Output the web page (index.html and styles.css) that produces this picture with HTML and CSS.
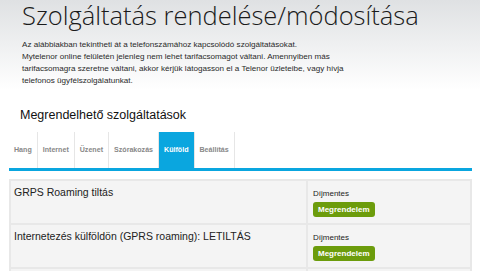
FILE: index.html
```html
<!DOCTYPE html>
<html lang="hu">
<head>
    <meta charset="UTF-8">
    <meta name="viewport" content="width=device-width, initial-scale=1.0">
    <title>Szolgáltatás rendelése/módosítása</title>
    <link rel="stylesheet" href="styles.css">
</head>
<body>
    <div class="head">
        <h1>Szolgáltatás rendelése/módosítása</h1>
        <p class="intro">Az alábbiakban tekintheti át a telefonszámához kapcsolódó szolgáltatásokat.<br>
        Mytelenor online felületén jelenleg nem lehet tarifacsomagot váltani. Amennyiben más<br>
        tarifacsomagra szeretne váltani, akkor kérjük látogasson el a Telenor üzleteibe, vagy hívja<br>
        telefonos ügyfélszolgálatunkat.</p>
    </div>
    <h2>Megrendelhető szolgáltatások</h2>
    <div class="tabs">
        <a class="tab">Hang</a>
        <a class="tab">Internet</a>
        <a class="tab">Üzenet</a>
        <a class="tab">Szórakozás</a>
        <a class="tab active">Külföld</a>
        <a class="tab">Beállítás</a>
    </div>
    <table class="services">
        <tr>
            <td class="name">GRPS Roaming tiltás</td>
            <td class="price">Díjmentes<br><button>Megrendelem</button></td>
        </tr>
        <tr>
            <td class="name">Internetezés külföldön (GPRS roaming): LETILTÁS</td>
            <td class="price">Díjmentes<br><button>Megrendelem</button></td>
        </tr>
        <tr>
            <td class="name">&nbsp;</td>
            <td class="price">&nbsp;</td>
        </tr>
    </table>
</body>
</html>
```

FILE: styles.css
```css
body { margin: 0; font-family: "Liberation Sans", Arial, sans-serif; color: #222; background: #fff; overflow: hidden; }
.head { background: linear-gradient(#dfe1e3, #fff 90px); padding: 1px 22px 14px; }
h1 { margin: 0; font-family: "Open Sans", sans-serif; font-weight: 300; font-size: 25.5px; line-height: 28px; color: #1a1a1a; }
.intro { margin: 10px 0 0; font-size: 8.1px; line-height: 12px; color: #2a2a2a; }
h2 { margin: 7px 0 0 20px; font-weight: normal; font-size: 12.5px; color: #111; }
.tabs { display: flex; margin: 10px 8px 0 9px; border-bottom: 3px solid #0aa6df; height: 36px; }
.tab { display: flex; align-items: center; padding: 0 5px; font-size: 7.1px; font-weight: bold; color: #888; border-right: 1px solid #e6e6e6; }
.tab.active { background: #0aa6df; color: #fff; }
.services { width: 463px; margin: 8px 0 0 9px; border-collapse: collapse; background: #f4f4f4; }
.services td { border: 2px solid #e8e8e8; vertical-align: top; height: 44px; padding: 0; box-sizing: border-box; }
.name { padding: 5px 3px 0 !important; font-size: 10.5px; line-height: 13px; width: 297px; }
.price { padding: 8px 5px 0 !important; font-size: 8px; line-height: 10px; }
button { display: inline-block; margin-top: 3px; height: 15px; padding: 0 5px; font-family: inherit; font-size: 8px; font-weight: bold; color: #fff; background: #6c9c0c; border: none; border-radius: 3px; }
```
